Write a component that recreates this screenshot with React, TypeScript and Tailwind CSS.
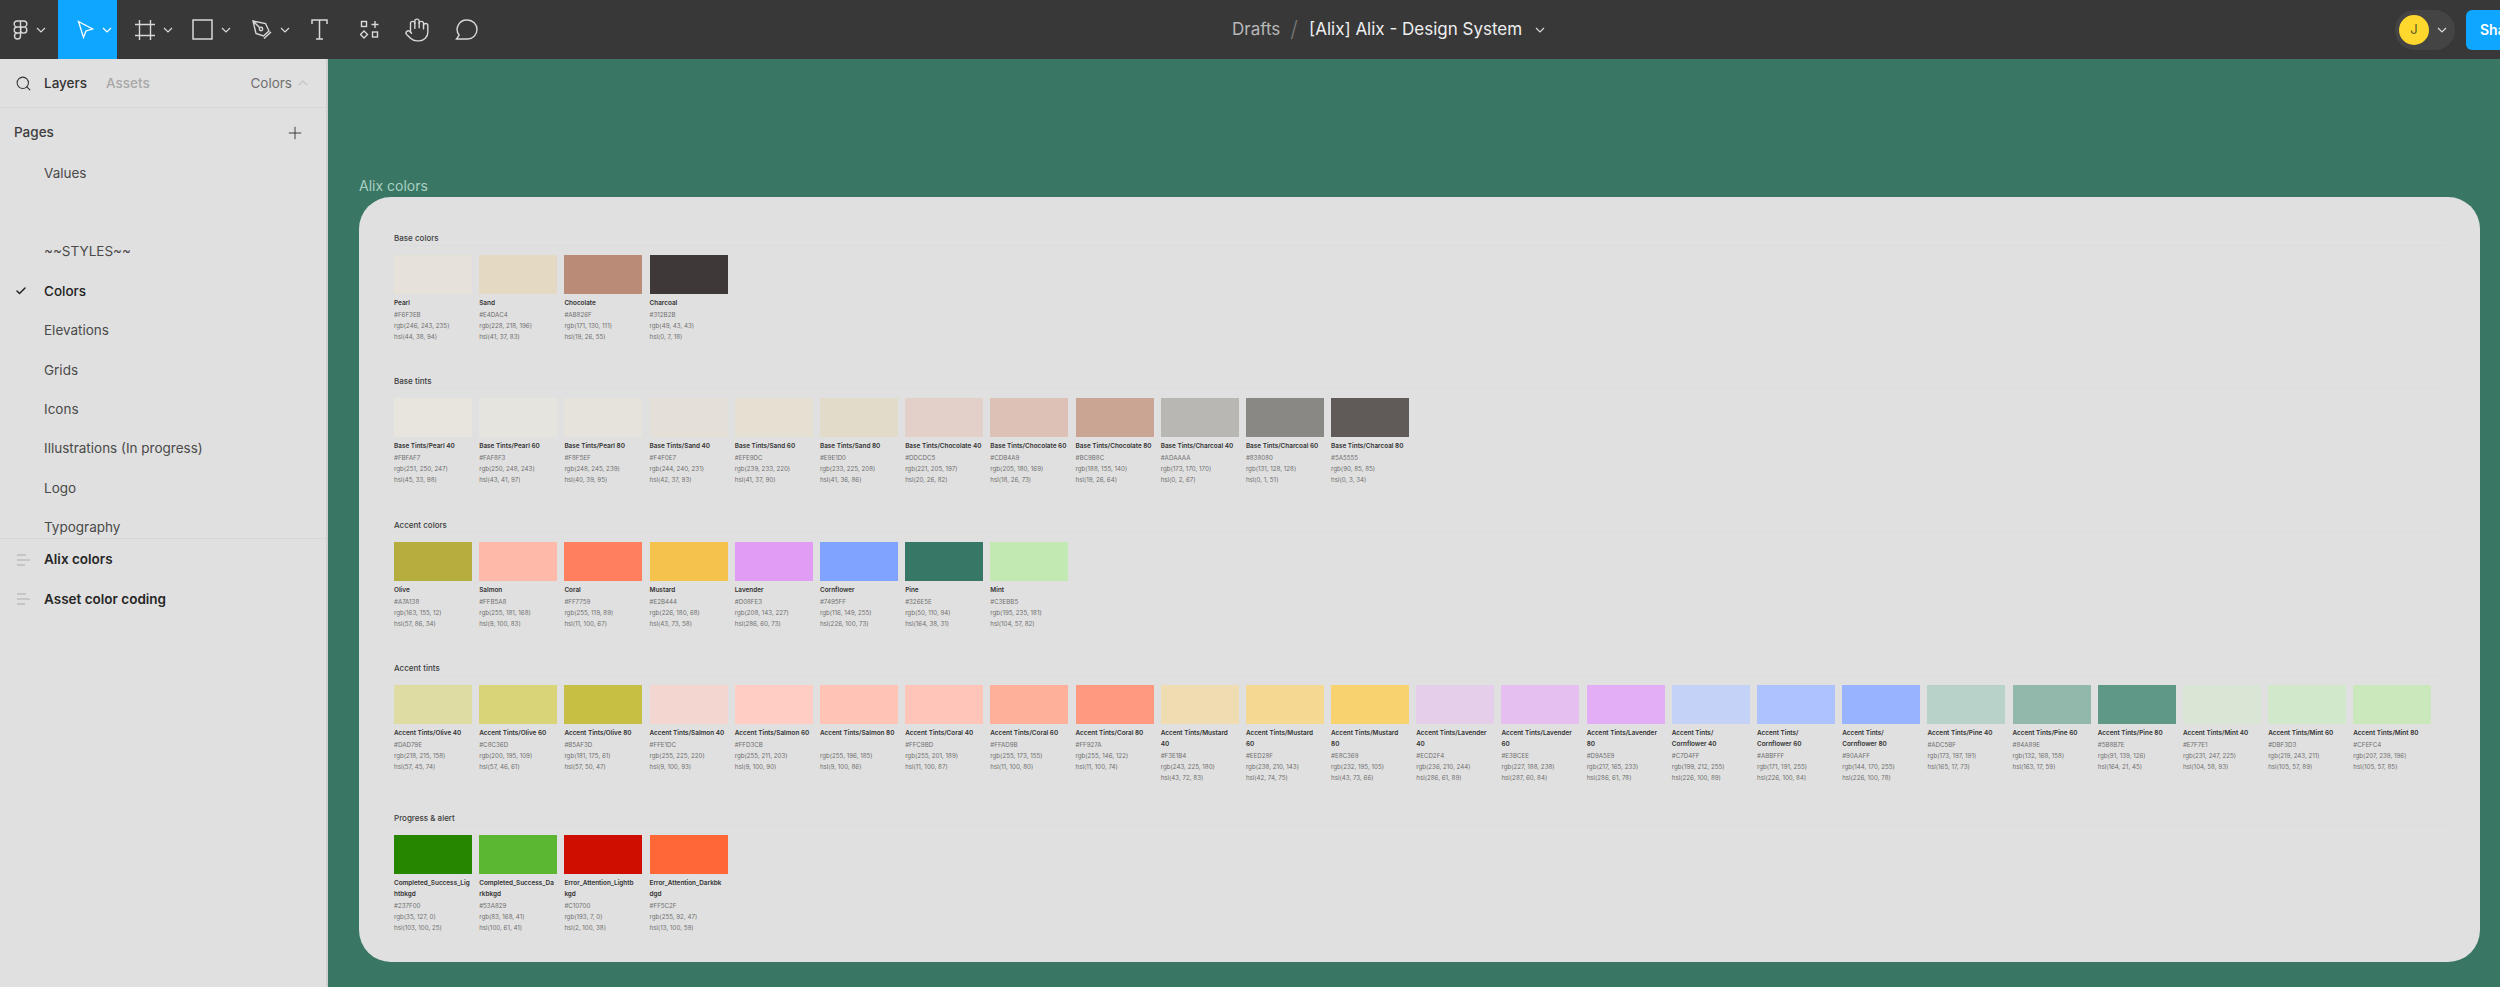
import { Check, Hand, Plus, Search } from "lucide-react";

type Swatch = { color: string; name: string; hex: string; rgb: string; hsl: string };

const sw = (color: string, name: string, hex: string, rgb: string, hsl: string): Swatch => ({ color, name, hex, rgb, hsl });

const sections: { title: string; cls: string; items: Swatch[] }[] = [
  {
    title: "Base colors",
    cls: "h-[143px]",
    items: [
      sw("#E6E2DA", "Pearl", "#F6F3EB", "rgb(246, 243, 235)", "hsl(44, 38, 94)"),
      sw("#E4DAC4", "Sand", "#E4DAC4", "rgb(228, 218, 196)", "hsl(41, 37, 83)"),
      sw("#BA8C77", "Chocolate", "#AB826F", "rgb(171, 130, 111)", "hsl(19, 26, 55)"),
      sw("#3E3838", "Charcoal", "#312B2B", "rgb(49, 43, 43)", "hsl(0, 7, 18)"),
    ],
  },
  {
    title: "Base tints",
    cls: "h-[144px]",
    items: [
      sw("#E7E5DE", "Base Tints/Pearl 40", "#FBFAF7", "rgb(251, 250, 247)", "hsl(45, 33, 98)"),
      sw("#E6E4DE", "Base Tints/Pearl 60", "#FAF8F3", "rgb(250, 248, 243)", "hsl(43, 41, 97)"),
      sw("#E6E3DC", "Base Tints/Pearl 80", "#F8F5EF", "rgb(248, 245, 239)", "hsl(40, 39, 95)"),
      sw("#E4DFD7", "Base Tints/Sand 40", "#F4F0E7", "rgb(244, 240, 231)", "hsl(42, 37, 93)"),
      sw("#E5E0D2", "Base Tints/Sand 60", "#EFE9DC", "rgb(239, 233, 220)", "hsl(41, 37, 90)"),
      sw("#E3DBC9", "Base Tints/Sand 80", "#E9E1D0", "rgb(233, 225, 208)", "hsl(41, 36, 86)"),
      sw("#E3D0C8", "Base Tints/Chocolate 40", "#DDCDC5", "rgb(221, 205, 197)", "hsl(20, 26, 82)"),
      sw("#DEC1B6", "Base Tints/Chocolate 60", "#CDB4A9", "rgb(205, 180, 169)", "hsl(18, 26, 73)"),
      sw("#CAA594", "Base Tints/Chocolate 80", "#BC9B8C", "rgb(188, 155, 140)", "hsl(19, 26, 64)"),
      sw("#B9B7B3", "Base Tints/Charcoal 40", "#ADAAAA", "rgb(173, 170, 170)", "hsl(0, 2, 67)"),
      sw("#8A8885", "Base Tints/Charcoal 60", "#838080", "rgb(131, 128, 128)", "hsl(0, 1, 51)"),
      sw("#605B58", "Base Tints/Charcoal 80", "#5A5555", "rgb(90, 85, 85)", "hsl(0, 3, 34)"),
    ],
  },
  {
    title: "Accent colors",
    cls: "h-[143px]",
    items: [
      sw("#B5AD3E", "Olive", "#A7A138", "rgb(163, 155, 12)", "hsl(57, 86, 34)"),
      sw("#FFB9A9", "Salmon", "#FFB5A8", "rgb(255, 181, 168)", "hsl(9, 100, 83)"),
      sw("#FF7F5F", "Coral", "#FF7759", "rgb(255, 119, 89)", "hsl(11, 100, 67)"),
      sw("#F5C34C", "Mustard", "#E2B444", "rgb(226, 180, 68)", "hsl(43, 73, 58)"),
      sw("#E19DF5", "Lavender", "#D08FE3", "rgb(208, 143, 227)", "hsl(286, 60, 73)"),
      sw("#7FA3FF", "Cornflower", "#7495FF", "rgb(116, 149, 255)", "hsl(226, 100, 73)"),
      sw("#367865", "Pine", "#326E5E", "rgb(50, 110, 94)", "hsl(164, 38, 31)"),
      sw("#C3E9B2", "Mint", "#C3EBB5", "rgb(195, 235, 181)", "hsl(104, 57, 82)"),
    ],
  },
  {
    title: "Accent tints",
    cls: "h-[150px]",
    items: [
      sw("#DEDCA3", "Accent Tints/Olive 40", "#DAD79E", "rgb(218, 215, 158)", "hsl(57, 45, 74)"),
      sw("#D9D478", "Accent Tints/Olive 60", "#C8C36D", "rgb(200, 195, 109)", "hsl(57, 46, 61)"),
      sw("#C7BE44", "Accent Tints/Olive 80", "#B5AF3D", "rgb(181, 175, 61)", "hsl(57, 50, 47)"),
      sw("#F3D6D0", "Accent Tints/Salmon 40", "#FFE1DC", "rgb(255, 225, 220)", "hsl(9, 100, 93)"),
      sw("#FFCDC3", "Accent Tints/Salmon 60", "#FFD3CB", "rgb(255, 211, 203)", "hsl(9, 100, 90)"),
      sw("#FFC4B6", "Accent Tints/Salmon 80", "", "rgb(255, 196, 185)", "hsl(9, 100, 86)"),
      sw("#FFC5B8", "Accent Tints/Coral 40", "#FFC9BD", "rgb(255, 201, 189)", "hsl(11, 100, 87)"),
      sw("#FFB09B", "Accent Tints/Coral 60", "#FFAD9B", "rgb(255, 173, 155)", "hsl(11, 100, 80)"),
      sw("#FF9A80", "Accent Tints/Coral 80", "#FF927A", "rgb(255, 146, 122)", "hsl(11, 100, 74)"),
      sw("#EFDDB1", "Accent Tints/Mustard\n40", "#F3E1B4", "rgb(243, 225, 180)", "hsl(43, 72, 83)"),
      sw("#F5D992", "Accent Tints/Mustard\n60", "#EED28F", "rgb(238, 210, 143)", "hsl(42, 74, 75)"),
      sw("#F9D270", "Accent Tints/Mustard\n80", "#E8C369", "rgb(232, 195, 105)", "hsl(43, 73, 66)"),
      sw("#E5CEE9", "Accent Tints/Lavender\n40", "#ECD2F4", "rgb(236, 210, 244)", "hsl(286, 61, 89)"),
      sw("#E6BFF1", "Accent Tints/Lavender\n60", "#E3BCEE", "rgb(227, 188, 238)", "hsl(287, 60, 84)"),
      sw("#E3AEF5", "Accent Tints/Lavender\n80", "#D9A5E9", "rgb(217, 165, 233)", "hsl(286, 61, 78)"),
      sw("#C5D2F8", "Accent Tints/\nCornflower 40", "#C7D4FF", "rgb(199, 212, 255)", "hsl(226, 100, 89)"),
      sw("#AEC2FF", "Accent Tints/\nCornflower 60", "#ABBFFF", "rgb(171, 191, 255)", "hsl(226, 100, 84)"),
      sw("#98B3FF", "Accent Tints/\nCornflower 80", "#90AAFF", "rgb(144, 170, 255)", "hsl(226, 100, 78)"),
      sw("#B8D1C9", "Accent Tints/Pine 40", "#ADC5BF", "rgb(173, 197, 191)", "hsl(165, 17, 73)"),
      sw("#92B8AB", "Accent Tints/Pine 60", "#84A89E", "rgb(132, 168, 158)", "hsl(163, 17, 59)"),
      sw("#609888", "Accent Tints/Pine 80", "#5B8B7E", "rgb(91, 139, 126)", "hsl(164, 21, 45)"),
      sw("#DAE6D5", "Accent Tints/Mint 40", "#E7F7E1", "rgb(231, 247, 225)", "hsl(104, 58, 93)"),
      sw("#D2E8CA", "Accent Tints/Mint 60", "#DBF3D3", "rgb(219, 243, 211)", "hsl(105, 57, 89)"),
      sw("#CBE8BD", "Accent Tints/Mint 80", "#CFEFC4", "rgb(207, 239, 196)", "hsl(105, 57, 85)"),
    ],
  },
  {
    title: "Progress & alert",
    cls: "",
    items: [
      sw("#278600", "Completed_Success_Lig\nhtbkgd", "#237F00", "rgb(35, 127, 0)", "hsl(103, 100, 25)"),
      sw("#5BB632", "Completed_Success_Da\nrkbkgd", "#53A829", "rgb(83, 168, 41)", "hsl(100, 61, 41)"),
      sw("#CF0E00", "Error_Attention_Lightb\nkgd", "#C10700", "rgb(193, 7, 0)", "hsl(2, 100, 38)"),
      sw("#FF6737", "Error_Attention_Darkbk\ndgd", "#FF5C2F", "rgb(255, 92, 47)", "hsl(13, 100, 59)"),
    ],
  },
];

const pages = ["~~STYLES~~", "Colors", "Elevations", "Grids", "Icons", "Illustrations (In progress)", "Logo", "Typography"];

const Chevron = ({ className = "" }: { className?: string }) => (
  <svg width="10" height="6" viewBox="0 0 10 6" fill="none" stroke="currentColor" strokeWidth="1.2" className={className}>
    <path d="M1 1l4 4 4-4" />
  </svg>
);

const Tool = ({ w, children, chevron, active }: { w: string; children: React.ReactNode; chevron?: boolean; active?: boolean }) => (
  <div className={`${w} h-full flex items-center shrink-0 ${active ? "bg-[#0fa6ff] text-white" : "text-[#d8d8d8]"}`}>
    {children}
    {chevron && <Chevron className="ml-[8px]" />}
  </div>
);

const RowIcon = () => (
  <svg width="13" height="12" viewBox="0 0 13 12" className="absolute left-[17px] top-1/2 -translate-y-1/2" fill="#c6c6c6">
    <rect x="0" y="0" width="9" height="2" />
    <rect x="0" y="5" width="13" height="2" />
    <rect x="0" y="10" width="8" height="2" />
  </svg>
);

const SwatchCard = ({ s }: { s: Swatch }) => (
  <div className="w-[78px] shrink-0">
    <div className="h-[39px] w-[78px]" style={{ backgroundColor: s.color }} />
    <div className="mt-[4px] text-[6.4px] leading-[10.8px] font-semibold text-[#333333] whitespace-pre">{s.name}</div>
    <div className="text-[6.2px] leading-[11.3px] text-[#707070] h-[11.3px]">{s.hex}</div>
    <div className="text-[6.2px] leading-[11.3px] text-[#707070] whitespace-nowrap">{s.rgb}</div>
    <div className="text-[6.2px] leading-[11.3px] text-[#707070] whitespace-nowrap">{s.hsl}</div>
  </div>
);

export default function App() {
  return (
    <div className="w-[2500px] h-[987px] overflow-hidden flex flex-col font-['Inter',sans-serif] bg-[#397764]">
      <header className="h-[59px] bg-[#383838] flex items-center shrink-0">
        <div className="w-[1232px] h-full flex shrink-0">
          <Tool w="w-[58px] pl-[13px]" chevron>
            <svg width="15" height="20" viewBox="0 0 15 20" fill="none" stroke="currentColor" strokeWidth="1.4">
              <path d="M7.5 1H4.2a3 3 0 000 6h3.3zM7.5 1h3.3a3 3 0 010 6H7.5zM7.5 7H4.2a3 3 0 000 6h3.3zM7.5 13H4.2a3 3 0 103.3 3zM13.8 10a3 3 0 11-6.3 0 3 3 0 016.3 0z" />
            </svg>
          </Tool>
          <Tool w="w-[59px] pl-[19px]" chevron active>
            <svg width="17" height="19" viewBox="0 0 17 19" fill="none" stroke="currentColor" strokeWidth="1.3">
              <path d="M1.5 1.5l14 7.5-6.5 2-2.5 6.500z" />
            </svg>
          </Tool>
          <Tool w="w-[58px] pl-[18px]" chevron>
            <svg width="20" height="20" viewBox="0 0 20 20" fill="none" stroke="currentColor" strokeWidth="1.4">
              <path d="M4.5 0v20M15.5 0v20M0 4.5h20M0 15.5h20" />
            </svg>
          </Tool>
          <Tool w="w-[60px] pl-[17px]" chevron>
            <svg width="21" height="21" viewBox="0 0 21 21" fill="none" stroke="currentColor" strokeWidth="1.5">
              <rect x="1" y="1" width="19" height="19" />
            </svg>
          </Tool>
          <Tool w="w-[59px] pl-[17px]" chevron>
            <svg width="20" height="20" viewBox="0 0 20 20" fill="none" stroke="currentColor" strokeWidth="1.4">
              <path d="M1 1l12.500 2.500 3.500 7.500-5.500 5L4 13.500zM1 1l6.500 6.500" />
              <circle cx="9" cy="9" r="1.700" />
              <path d="M12 18.500l7-6.500" />
            </svg>
          </Tool>
          <Tool w="w-[50px] pl-[17px]">
            <svg width="17" height="21" viewBox="0 0 17 21" fill="none" stroke="currentColor" strokeWidth="1.5">
              <path d="M1 5V1h15v4M8.5 1v19M5 20h7" />
            </svg>
          </Tool>
          <Tool w="w-[49px] pl-[16px]">
            <svg width="20" height="20" viewBox="0 0 20 20" fill="none" stroke="currentColor" strokeWidth="1.4">
              <rect x="1.5" y="1.5" width="5" height="5" />
              <path d="M15 1v7M11.5 4.500h7" />
              <path d="M4 11l3.500 3.500L4 18 .5 14.500z" />
              <rect x="12.500" y="12" width="5" height="5" />
            </svg>
          </Tool>
          <Tool w="w-[50px] pl-[11px]">
            <Hand size={26} strokeWidth={1.3} />
          </Tool>
          <Tool w="w-[47px] pl-[12px]">
            <svg width="23" height="22" viewBox="0 0 23 22" fill="none" stroke="currentColor" strokeWidth="1.4">
              <path d="M12.500 1a9.500 9.500 0 010 19H1.500l2.600-3.800A9.500 9.500 0 0112.500 1z" />
            </svg>
          </Tool>
        </div>
        <div className="flex items-center text-[17px] text-[#b8b8b8] shrink-0 whitespace-nowrap">
          <span>Drafts</span>
          <span className="ml-[10px] mr-[11px] text-[#777] text-[22px] font-light">/</span>
          <span className="text-[#eeeeee]">[Alix] Alix - Design System</span>
          <Chevron className="ml-[13px] text-[#d8d8d8]" />
        </div>
        <div className="ml-auto flex items-center shrink-0 -mr-[46px]">
          <div className="w-[60px] h-[40px] rounded-[20px] bg-[#444444] flex items-center pl-[4px] gap-[8px] text-[#d8d8d8]">
            <div className="w-[30px] h-[30px] rounded-full bg-[#ffd82e] flex items-center justify-center text-[13px] text-[#5a5a2a]">J</div>
            <Chevron />
          </div>
          <div className="ml-[11px] w-[80px] h-[40px] rounded-[6px] bg-[#0fa6ff] text-white font-semibold text-[14px] flex items-center pl-[14px]">Share</div>
        </div>
      </header>

      <div className="flex-1 flex min-h-0">
        <aside className="w-[328px] shrink-0 bg-[#e0e0e0] border-r-2 border-[#cfcfcf] flex flex-col text-[13.500px] text-[#4a4a4a]">
          <div className="h-[49px] shrink-0 flex items-center border-b border-[#d6d6d6] pl-[15px] pr-[18px]">
            <Search size={17} strokeWidth={1.500} className="text-[#333] mr-[12px]" />
            <span className="font-medium text-[#333]">Layers</span>
            <span className="ml-[19px] font-medium text-[#a8a8a8]">Assets</span>
            <span className="ml-auto text-[#707070]">Colors</span>
            <Chevron className="ml-[6px] rotate-180 text-[#c4c4c4]" />
          </div>
          <div className="h-[49px] shrink-0 flex items-center pl-[14px] pr-[21px] font-medium text-[#3d3d3d]">
            <span>Pages</span>
            <Plus size={20} strokeWidth={1.100} className="ml-auto text-[#333]" />
          </div>
          <div className="h-[39.400px] shrink-0 flex items-center pl-[44px] mt-[-4px]">Values</div>
          <div className="h-[39.400px] shrink-0" />
          {pages.map((p) => (
            <div key={p} className={`relative h-[39.400px] shrink-0 flex items-center pl-[44px] ${p === "Colors" ? "text-[#222] font-medium" : ""}`}>
              {p === "Colors" && <Check size={12} strokeWidth={3} className="absolute left-[15px] text-[#222]" />}
              {p}
            </div>
          ))}
          <div className="border-t border-[#d6d6d6] mt-[-9px] pt-[1px] font-semibold text-[#262626]">
            {["Alix colors", "Asset color coding"].map((l) => (
              <div key={l} className="relative h-[39.400px] flex items-center pl-[44px]">
                <RowIcon />
                {l}
              </div>
            ))}
          </div>
        </aside>

        <main className="flex-1 min-w-0 pl-[31px] pr-[20px] pt-[117px]">
          <div className="text-[14px] leading-[20px] text-[#a9cfc2] h-[21px]">Alix colors</div>
          <div className="h-[765px] rounded-[32px] bg-[#e0e0e0] pl-[35px] pr-[35px] pt-[34px]">
            {sections.map((sec) => (
              <section key={sec.title} className={sec.cls}>
                <h3 className="text-[8px] leading-[14px] font-medium text-[#3c3c3c] border-b border-[#dcdcdc] h-[15px]">{sec.title}</h3>
                <div className="flex gap-[7.200px] mt-[9px]">
                  {sec.items.map((s) => (
                    <SwatchCard key={s.name} s={s} />
                  ))}
                </div>
              </section>
            ))}
          </div>
        </main>
      </div>
    </div>
  );
}
